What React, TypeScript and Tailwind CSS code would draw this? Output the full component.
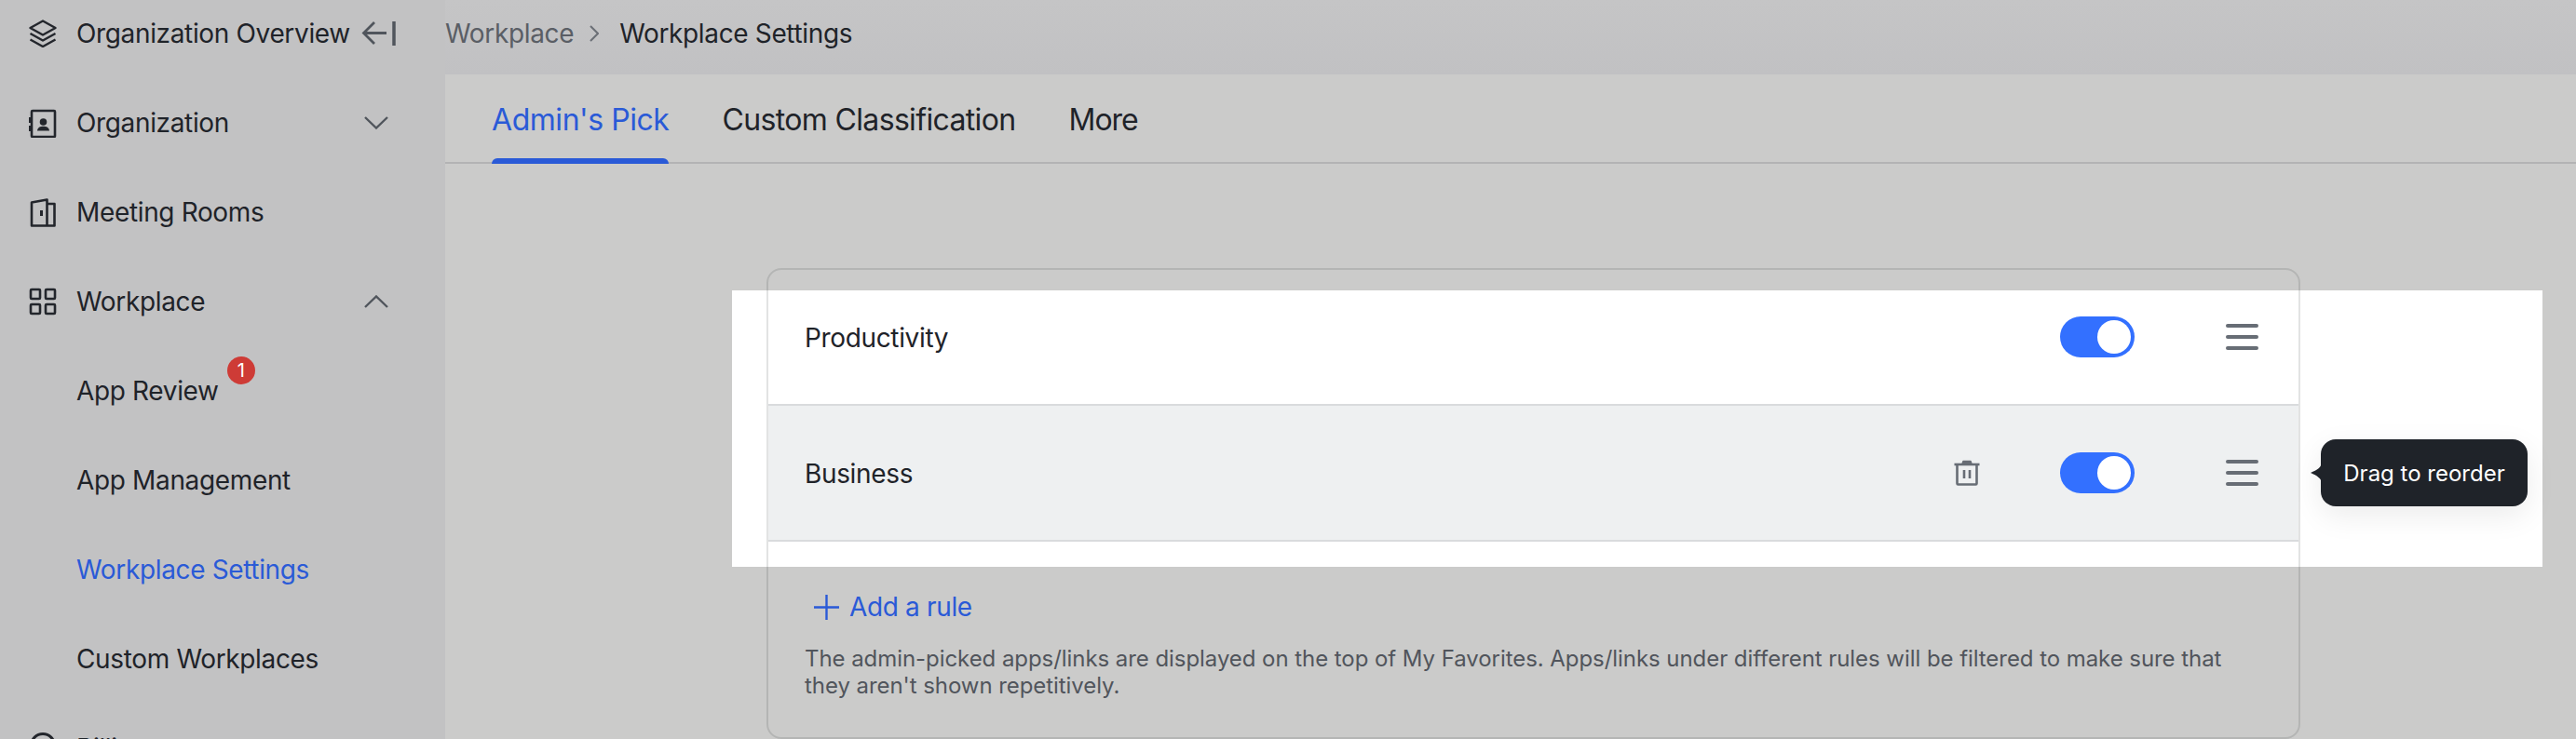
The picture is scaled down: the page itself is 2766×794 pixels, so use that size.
const font = "font-['Inter','Noto_Sans',sans-serif]"

function LayersIcon() {
  return (
    <svg width="30" height="30" viewBox="0 0 30 30" fill="none" stroke="#23262c" strokeWidth="2.400" strokeLinejoin="round">
      <path d="M15 1.500 28.500 9 15 16.500 1.500 9Z" />
      <path d="M1.500 15 15 22.500 28.500 15" />
      <path d="M1.500 21.500 15 29 28.500 21.500" />
    </svg>
  )
}

function ContactsIcon() {
  return (
    <svg width="30" height="32" viewBox="0 0 30 32" fill="none" stroke="#23262c" strokeWidth="2.600">
      <rect x="3" y="3" width="25" height="28" rx="1" />
      <path d="M1.500 10v6M1.500 19v6" strokeWidth="3" />
      <circle cx="15.500" cy="15" r="3.800" fill="#23262c" stroke="none" />
      <path d="M9 24.500c.4-3.400 3-4.800 6.500-4.800s6.100 1.400 6.500 4.800Z" fill="#23262c" stroke="none" />
    </svg>
  )
}

function DoorIcon() {
  return (
    <svg width="30" height="34" viewBox="0 0 30 34" fill="none" stroke="#23262c" strokeWidth="2.600" strokeLinejoin="round">
      <path d="M3 6.500 19.500 3.500V31.500H3ZM19.500 8H27.500V31.500H19.500" />
      <path d="M13.500 15v6" strokeWidth="3" />
    </svg>
  )
}

function GridIcon() {
  return (
    <svg width="30" height="30" viewBox="0 0 30 30" fill="none" stroke="#23262c" strokeWidth="2.600">
      <rect x="2" y="2" width="10" height="10" rx="1" />
      <rect x="18" y="2" width="10" height="10" rx="1" />
      <rect x="2" y="18" width="10" height="10" rx="1" />
      <rect x="18" y="18" width="10" height="10" rx="1" />
    </svg>
  )
}

function CollapseIcon() {
  return (
    <svg width="38" height="28" viewBox="0 0 38 28" fill="none" stroke="#50555c" strokeWidth="2.800">
      <path d="M14 2 2.500 13.500 14 25M2.500 13.500H27" />
      <path d="M35 1v26" strokeWidth="3.500" />
    </svg>
  )
}

function ChevronIcon({ up }: { up?: boolean }) {
  return (
    <svg width="26" height="14" viewBox="0 0 26 14" fill="none" stroke="#50555c" strokeWidth="2.400">
      <path d={up ? 'M1 13 13 1.500 25 13' : 'M1 1 13 12.500 25 1'} />
    </svg>
  )
}

function CrumbChevron() {
  return (
    <svg width="10" height="18" viewBox="0 0 10 18" fill="none" stroke="#6b6f76" strokeWidth="2" className="mr-[22px] ml-[17px]">
      <path d="M1 1 9 9 1 17" />
    </svg>
  )
}

function TrashIcon() {
  return (
    <svg width="28" height="28" viewBox="0 0 28 28" fill="none" stroke="#676d75" strokeWidth="2.600" strokeLinejoin="round">
      <path d="M0.500 5H27.500" />
      <path d="M9 4.500 10 1.500H18L19 4.500" fill="#676d75" strokeWidth="1.500" />
      <path d="M3.500 5V25.500a1 1 0 0 0 1 1H23.500a1 1 0 0 0 1-1V5" />
      <path d="M11 11v9M17 11v9" />
    </svg>
  )
}

function PlusIcon() {
  return (
    <svg width="27" height="27" viewBox="0 0 27 27" fill="none" stroke="#2a5ad7" strokeWidth="2.400">
      <path d="M13.500 0v27M0 13.500h27" />
    </svg>
  )
}

function GripIcon() {
  return (
    <div className="flex w-[35px] flex-col gap-2">
      <div className="h-[4px] rounded-full bg-[#676d75]" />
      <div className="h-[4px] rounded-full bg-[#676d75]" />
      <div className="h-[4px] rounded-full bg-[#676d75]" />
    </div>
  )
}

function Toggle() {
  return (
    <div className="flex h-[44px] w-[80px] items-center justify-end rounded-full bg-[#3370ff] pr-1">
      <div className="h-9 w-9 rounded-full bg-white" />
    </div>
  )
}

function SideItem({ icon, label, right }: { icon: React.ReactNode; label: string; right?: React.ReactNode }) {
  return (
    <div className="flex h-24 items-center pr-[61px] pl-[31px]">
      <div className="flex w-[51px] items-center">{icon}</div>
      <span className="flex-1 text-[28px] text-[#1f2329]">{label}</span>
      {right}
    </div>
  )
}

function SubItem({ label, active, badge }: { label: string; active?: boolean; badge?: boolean }) {
  return (
    <div className={`flex h-24 items-center pl-[82px] text-[28px] ${active ? 'text-[#2a5ad7]' : 'text-[#1f2329]'}`}>
      <span className="relative">
        {label}
        {badge && (
          <span className="absolute top-[-16px] right-[-39px] flex h-[30px] w-[30px] items-center justify-center rounded-full bg-[#ce3b36] text-[20px] leading-none text-white">
            1
          </span>
        )}
      </span>
    </div>
  )
}

function RuleRow({ label, hovered }: { label: string; hovered?: boolean }) {
  return (
    <div className={`flex h-[146px] items-center border-b-2 border-[#d9dbdd] pr-[43px] pl-[39px] ${hovered ? 'bg-[#eef0f1]' : ''}`}>
      <span className="flex-1 pt-[2px] text-[28px] text-[#1f2329]">{label}</span>
      {hovered && (
        <div className="mr-[86px]">
          <TrashIcon />
        </div>
      )}
      <div className="mr-[98px]">
        <Toggle />
      </div>
      <GripIcon />
    </div>
  )
}

export default function App() {
  return (
    <div className={`${font} flex h-[794px] w-[2766px] overflow-hidden bg-[#c2c2c3] tracking-[-0.35px]`}>
      <aside className="w-[478px] shrink-0 overflow-hidden bg-[#c2c2c3]">
        <div className="-mt-3">
          <div className="flex h-24 items-center pl-[31px]">
            <div className="flex w-[51px] items-center">
              <LayersIcon />
            </div>
            <span className="w-[306px] text-[28px] text-[#1f2329]">Organization Overview</span>
            <CollapseIcon />
          </div>
          <SideItem icon={<ContactsIcon />} label="Organization" right={<ChevronIcon />} />
          <SideItem icon={<DoorIcon />} label="Meeting Rooms" />
          <SideItem icon={<GridIcon />} label="Workplace" right={<ChevronIcon up />} />
          <SubItem label="App Review" badge />
          <SubItem label="App Management" />
          <SubItem label="Workplace Settings" active />
          <SubItem label="Custom Workplaces" />
          <div className="flex h-24 items-center pl-8">
            <div className="mb-1 h-[30px] w-[28px] rounded-full border-[3px] border-[#23262c]" />
            <span className="ml-[22px] text-[28px] text-[#1f2329]">Billing</span>
          </div>
        </div>
      </aside>

      <div className="flex min-w-0 flex-1 flex-col">
        <header className="flex h-20 shrink-0 items-center bg-gradient-to-b from-[#c5c5c6] to-[#c1c1c3] pb-2 text-[28px]">
          <span className="text-[#5a5e65]">Workplace</span>
          <CrumbChevron />
          <span className="text-[#1f2329]">Workplace Settings</span>
        </header>

        <main className="isolate flex-1 bg-[#cbcbca]">
          <nav className="flex h-[96px] items-stretch gap-[57px] border-b-2 border-[#b3b3b4] pl-[50px] text-[32px] text-[#1f2329]">
            <span className="relative flex items-center pt-1 tracking-[-0.45px] text-[#2a5ad7]">
              Admin's Pick
              <span className="absolute right-0 bottom-[-2px] left-0 h-[6px] rounded-t-md bg-[#2a5ad7]" />
            </span>
            <span className="flex items-center pt-1 tracking-[-0.65px]">Custom Classification</span>
            <span className="flex items-center pt-1 tracking-[-1px]">More</span>
          </nav>

          <div className="relative mt-[112px] ml-[345px] w-[1647px] rounded-[16px] border-2 border-[#1f2329]/[0.13] pb-[41px]">
            {/* white spotlight of the product tour, behind the rows but under the card border */}
            <div className="absolute top-[22px] left-[-39px] -z-10 h-[297px] w-[1944px] bg-white" />
            <RuleRow label="Productivity" />
            <RuleRow label="Business" hovered />

            <div className="absolute top-[182px] left-[1667px] flex h-[72px] w-[222px] items-center justify-center rounded-[16px] bg-[#1f2329] pt-[2px] text-[24px] tracking-normal text-white shadow-[0_10px_32px_rgba(0,0,0,0.08)]">
              Drag to reorder
              <svg width="12" height="24" viewBox="0 0 12 24" className="absolute top-[24px] left-[-11px]" fill="#1f2329">
                <path d="M12 0C12 6 7 9 0 12 7 15 12 18 12 24Z" />
              </svg>
            </div>

            <div className="mt-[49px] flex items-center gap-[11px] pl-[49px] text-[28px] text-[#2a5ad7]">
              <PlusIcon />
              Add a rule
            </div>
            <p className="mt-5 w-[1580px] pl-[39px] text-[24px] leading-[29px] tracking-[-0.06px] text-[#51555c]">
              The admin-picked apps/links are displayed on the top of My Favorites. Apps/links under different rules will be filtered to make sure that they aren't shown repetitively.
            </p>
          </div>
        </main>
      </div>
    </div>
  )
}
